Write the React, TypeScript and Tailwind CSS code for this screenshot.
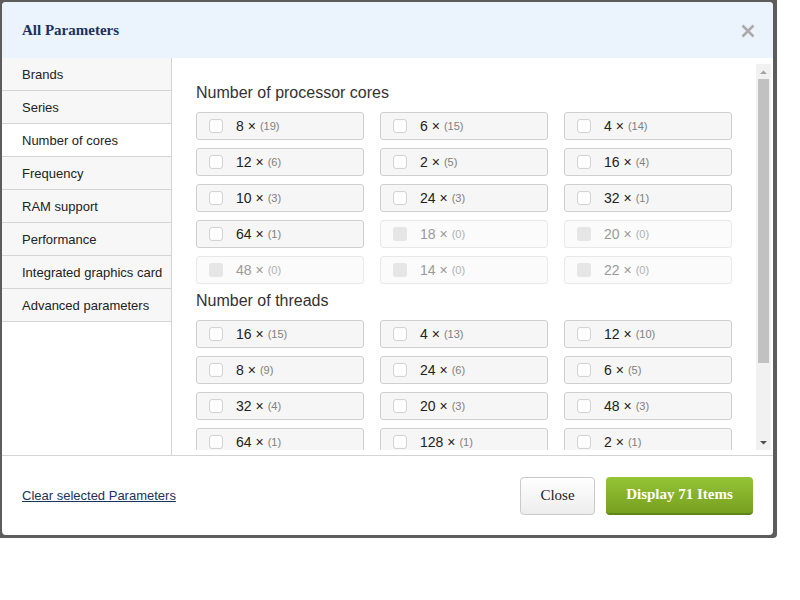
const cores: [number, number][] = [
  [8, 19], [6, 15], [4, 14],
  [12, 6], [2, 5], [16, 4],
  [10, 3], [24, 3], [32, 1],
  [64, 1], [18, 0], [20, 0],
  [48, 0], [14, 0], [22, 0],
];

const threads: [number, number][] = [
  [16, 15], [4, 13], [12, 10],
  [8, 9], [24, 6], [6, 5],
  [32, 4], [20, 3], [48, 3],
  [64, 1], [128, 1], [2, 1],
];

const tabs = [
  "Brands",
  "Series",
  "Number of cores",
  "Frequency",
  "RAM support",
  "Performance",
  "Integrated graphics card",
  "Advanced parameters",
];

const Option = ({ value, count }: { value: number; count: number }) => {
  const disabled = count === 0;
  return (
    <label
      className={
        disabled
          ? "flex items-center h-[28px] px-[12px] rounded-[3px] border border-[#e8e8e8] bg-[#fbfbfb]"
          : "flex items-center h-[28px] px-[12px] rounded-[3px] border border-[#cfcfcf] bg-[#f6f6f6]"
      }>
      <span
        className={
          disabled
            ? "w-[14px] h-[14px] rounded-[3px] bg-[#e6e6e6]"
            : "w-[14px] h-[14px] rounded-[3px] border border-[#d2d2d2] bg-white"
        }
      />
      <span className={disabled ? "ml-[13px] text-[14px] text-[#9a9a9a]" : "ml-[13px] text-[14px] text-[#222]"}>
        {value} ×
      </span>
      <span className={disabled ? "ml-[4px] text-[11px] text-[#b0b0b0]" : "ml-[4px] text-[11px] text-[#808080]"}>
        ({count})
      </span>
    </label>
  );
};

const Group = ({ title, items }: { title: string; items: [number, number][] }) => (
  <div>
    <h2 className="text-[16px] leading-[20px] text-[#333]">{title}</h2>
    <div className="mt-[9px] grid grid-cols-3 gap-x-[16px] gap-y-[8px]">
      {items.map(([v, c], i) => (
        <Option key={i} value={v} count={c} />
      ))}
    </div>
  </div>
);

// classic scrollbar drawing
const ScrollBar = () => (
  <div className="w-[15px] shrink-0 bg-[#f1f1f1] flex flex-col items-center">
    <svg width="15" height="15" viewBox="0 0 15 15" className="shrink-0">
      <path d="M4 10 L11 10 L7.5 6.5 Z" fill="#a3a3a3" />
    </svg>
    <div className="w-[11px] h-[284px] bg-[#c1c1c1]" />
    <div className="flex-1" />
    <svg width="15" height="15" viewBox="0 0 15 15" className="shrink-0">
      <path d="M4 6 L11 6 L7.5 9.5 Z" fill="#505050" />
    </svg>
  </div>
);

export default function App() {
  return (
    <div className="w-[800px] h-[600px] bg-white font-['Liberation_Sans',Arial,sans-serif]">
      <div className="w-[777px] h-[538px] bg-[#5c5c5c] pt-[2px] pl-[2px] pr-[4px] pb-[3px] rounded-br-[4px]">
        <div className="w-full h-full bg-white rounded-[4px] overflow-hidden flex flex-col">
          {/* header */}
          <div className="h-[56px] shrink-0 bg-[#ebf3fd] flex items-center justify-between pl-[20px] pr-[18px]">
            <h1 className="font-['Liberation_Serif',serif] font-bold text-[15px] text-[#1b315e]">
              All Parameters
            </h1>
            <svg width="14" height="14" viewBox="0 0 14 14" className="mt-[2px]">
              <path d="M1.5 1.5 L12.5 12.5 M12.5 1.5 L1.5 12.5" stroke="#ababab" strokeWidth="2.6" />
            </svg>
          </div>

          {/* body */}
          <div className="flex h-[397px] shrink-0">
            <div className="w-[170px] shrink-0 border-r border-[#d4d4d4] bg-white">
              {tabs.map((t) => (
                <div
                  key={t}
                  className={
                    t === "Number of cores"
                      ? "h-[33px] flex items-center pt-[2px] pl-[20px] text-[13px] text-[#222] bg-white border-b border-[#d4d4d4]"
                      : "h-[33px] flex items-center pt-[2px] pl-[20px] text-[13px] text-[#222] bg-[#f7f7f7] border-b border-[#d4d4d4]"
                  }>
                  {t}
                </div>
              ))}
            </div>
            <div className="flex-1 flex pt-[6px] pb-[5px] pr-[2px]">
              <div className="flex-1 overflow-hidden">
                <div className="pl-[24px] pr-[24px] pt-[19px] flex flex-col gap-[7px]">
                  <Group title="Number of processor cores" items={cores} />
                  <Group title="Number of threads" items={threads} />
                </div>
              </div>
              <ScrollBar />
            </div>
          </div>

          {/* footer */}
          <div className="flex-1 border-t border-[#d4d4d4] flex items-center justify-between pl-[20px] pr-[20px]">
            <a href="#" className="text-[13px] text-[#1b315e] underline">
              Clear selected Parameters
            </a>
            <div className="flex gap-[11px]">
              <button className="w-[75px] h-[38px] rounded-[4px] border border-[#cacaca] bg-linear-to-b from-white to-[#ededed] font-['Liberation_Serif',serif] text-[15px] text-[#222]">
                Close
              </button>
              <button className="w-[147px] h-[38px] rounded-[4px] border-b-2 border-[#5f8717] bg-linear-to-b from-[#95c435] to-[#77a020] font-['Liberation_Serif',serif] font-bold text-[15px] text-white">
                Display 71 Items
              </button>
            </div>
          </div>
        </div>
      </div>
    </div>
  );
}
